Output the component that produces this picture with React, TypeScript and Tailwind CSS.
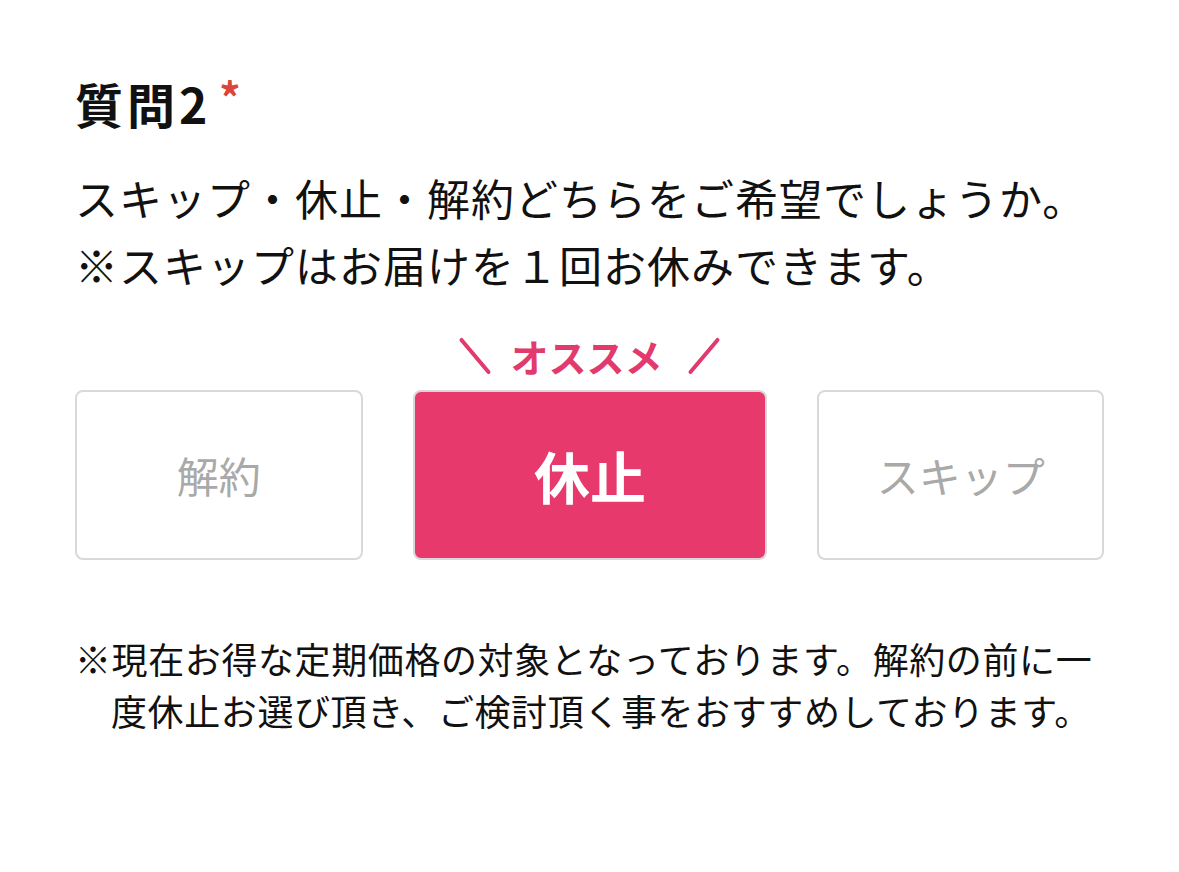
const font = "font-['Noto_Sans_CJK_JP','Noto_Sans',sans-serif]";

const ChoiceButton = ({ label, active, width }: { label: string; active?: boolean; width: string }) => {
  if (active) {
    return (
      <button
        className={`${width} h-[170px] rounded-[8px] border-2 border-[#dcd6d8] bg-[#e8396c] text-white text-[56px] font-bold leading-none flex items-center justify-center`}
      >
        {label}
      </button>
    );
  }
  return (
    <button
      className={`${width} h-[170px] rounded-[8px] border-2 border-[#d9d9d9] bg-white text-[#a9a9a9] text-[42px] leading-none flex items-center justify-center`}
    >
      {label}
    </button>
  );
};

// thick diagonal stroke drawn with css, used around the recommend label
const Stroke = ({ dir }: { dir: 'back' | 'fwd' }) => (
  <span className="relative inline-block w-[30px] h-[36px]">
    <span
      className={`absolute left-1/2 top-1/2 w-[4px] h-[46px] -translate-x-1/2 -translate-y-1/2 rounded-full bg-[#e23a6c] ${
        dir === 'back' ? '-rotate-[40deg]' : 'rotate-[40deg]'
      }`}
    />
  </span>
);

export default function App() {
  return (
    <div className={`${font} min-h-screen bg-white text-[#111] px-[75px] pt-[72px]`}>
      {/* question heading */}
      <h2 className="flex items-start text-[48px] font-bold leading-[62px] tracking-[4px]">
        質問2
        <span className="ml-[8px] mt-[4px] text-[42px] leading-[40px] text-[#d9473c]">*</span>
      </h2>

      <p className="mt-[30px] text-[43px] leading-[67px] tracking-[1px]">
        スキップ・休止・解約どちらをご希望でしょうか。
        <br />
        ※スキップはお届けを１回お休みできます。
      </p>

      {/* choices */}
      <div className="mt-[38px] flex justify-center">
        <div className="flex items-center text-[38px] font-bold leading-[40px] text-[#e23a6c]">
          <Stroke dir="back" />
          <span className="ml-[20px] mr-[26px]">オススメ</span>
          <Stroke dir="fwd" />
        </div>
      </div>
      <div className="mt-[14px] flex gap-[50px]">
        <ChoiceButton label="解約" width="w-[288px]" />
        <ChoiceButton label="休止" width="w-[355px]" active />
        <ChoiceButton label="スキップ" width="w-[287px]" />
      </div>

      <p className="mt-[72px] pl-[36px] -indent-[36px] text-[36px] leading-[52px] tracking-[0.6px]">
        ※現在お得な定期価格の対象となっております。解約の前に一度休止お選び頂き、ご検討頂く事をおすすめしております。
      </p>
    </div>
  );
}
